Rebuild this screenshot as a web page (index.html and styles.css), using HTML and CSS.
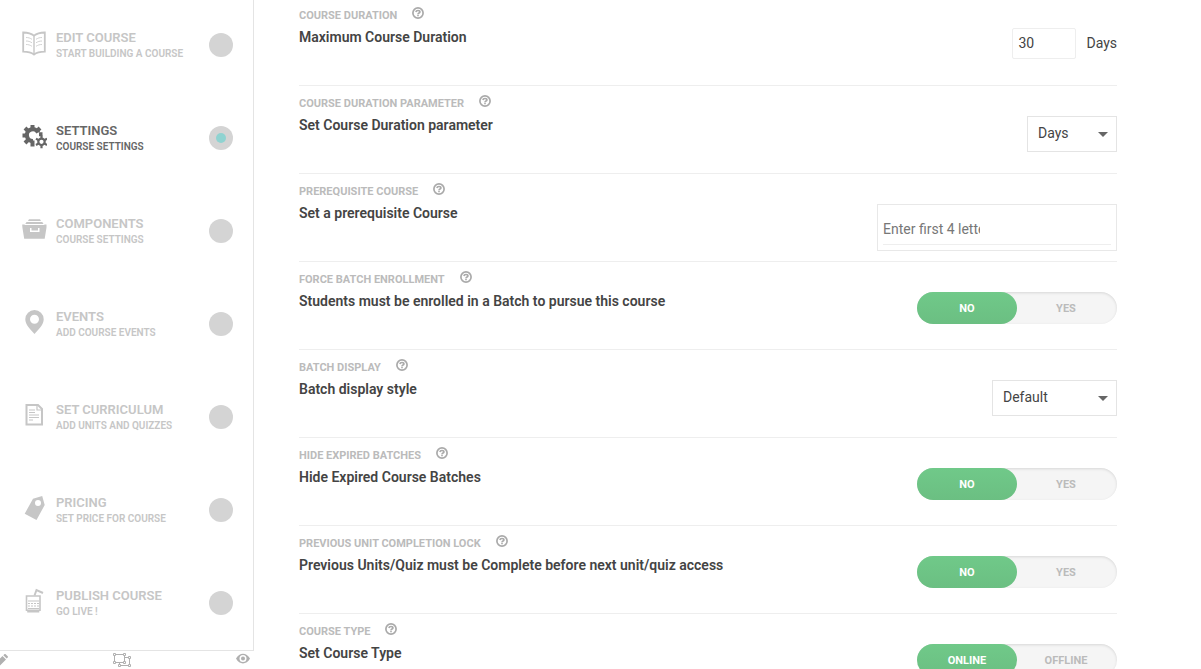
FILE: index.html
```html
<!DOCTYPE html>
<html lang="en">
<head>
<meta charset="utf-8">
<meta name="viewport" content="width=device-width, initial-scale=1">
<title>Course Settings</title>
<link rel="stylesheet" href="styles.css">
</head>
<body>
<svg class="sprite" aria-hidden="true">
  <symbol id="help" viewBox="0 0 12 12">
    <circle cx="6" cy="6" r="5.100" fill="none" stroke="currentColor" stroke-width="1.700"/>
    <path d="M3.900 5C4.100 3.700 5 3.500 6 3.500c1.200 0 1.900.6 1.900 1.400C7.900 6 6 5.900 6 7.200" fill="none" stroke="currentColor" stroke-width="1.700"/>
    <path d="M5.200 7.800h1.600v1.500H5.200z" fill="currentColor"/>
  </symbol>
</svg>
<div class="app">
  <aside class="side">
    <nav class="steps" aria-label="Course steps">
      <a class="step" href="#edit">
        <svg class="step-icon" viewBox="0 0 26 26"><path d="M2.200 2.500C6.500 2.600 10 3.200 13 5.600c3-2.400 6.500-3 10.800-3.100v19.200c-4.800 0-8 .6-10.800 2.800-2.800-2.200-6-2.800-10.800-2.800z" fill="none" stroke="currentColor" stroke-width="1.800"/><path d="M13 5.500V24" stroke="currentColor" stroke-width="1.400"/><path d="M5 7.500c2.500 0 4 .6 6 1.800M5 11c2.500 0 4 .6 6 1.800M5 14.500c2.500 0 4 .6 6 1.800M21 7.500c-2.500 0-4 .6-6 1.800M21 11c-2.500 0-4 .6-6 1.800M21 14.500c-2.500 0-4 .6-6 1.800" fill="none" stroke="currentColor" stroke-width=".8"/></svg>
        <span class="step-text"><strong>EDIT COURSE</strong><small>START BUILDING A COURSE</small></span><span class="dot"></span>
      </a>
      <a class="step active" href="#settings" aria-current="step">
        <svg class="step-icon" viewBox="0 0 26 26"><g fill="none" stroke="currentColor"><path d="M17.200 9.500A6 6 0 1 0 12 18.200" stroke-width="4.200"/><path d="M11.500 2v4M4 5l3 3M1.500 12.500h4M4 20l3-3M11.500 23.500v-6M19 5l-3 3M18 11.200h3.500" stroke-width="4"/><circle cx="20.500" cy="18.800" r="3.200" stroke-width="2.200"/><path d="M20.500 12.500v3M20.500 22v3.200M15 15.600l2.700 1.600M23.300 20.400l2.700 1.600M15 22l2.700-1.600M23.300 17.200l2.700-1.600" stroke-width="2.200"/></g></svg>
        <span class="step-text"><strong>SETTINGS</strong><small>COURSE SETTINGS</small></span><span class="dot"></span>
      </a>
      <a class="step" href="#components">
        <svg class="step-icon" viewBox="0 0 26 26"><path d="M8 3.200h11l1 1.800H7zM5.500 6h15.800l1.200 2H4.300zM1.200 8.500h2.500v.5h19.600v-.5h2.200v3l-1.800 11.300H3.200L1.400 11.500zM9 12v4h9.500v-4h-1.500v2.500h-6.500V12z" fill="currentColor" fill-rule="evenodd"/></svg>
        <span class="step-text"><strong>COMPONENTS</strong><small>COURSE SETTINGS</small></span><span class="dot"></span>
      </a>
      <a class="step" href="#events">
        <svg class="step-icon" viewBox="0 0 26 26"><path d="M13.500 1a9.200 9.200 0 0 0-9.200 9.200C4.300 16 9.500 20 13.500 25c4-5 9.200-9 9.200-14.800A9.200 9.200 0 0 0 13.500 1zm0 4.800a4.500 4.500 0 1 1 0 9 4.500 4.500 0 0 1 0-9z" fill="currentColor" fill-rule="evenodd"/></svg>
        <span class="step-text"><strong>EVENTS</strong><small>ADD COURSE EVENTS</small></span><span class="dot"></span>
      </a>
      <a class="step" href="#curriculum">
        <svg class="step-icon" viewBox="0 0 26 26"><path d="M5.500 3H17l4 4v15.500H5.500z" fill="none" stroke="currentColor" stroke-width="2"/><path d="M16 3v5h5M8 8h6M8 10.500h6M8 13h10M8 15.500h10M8 18h4" fill="none" stroke="currentColor" stroke-width="1.200"/></svg>
        <span class="step-text"><strong>SET CURRICULUM</strong><small>ADD UNITS AND QUIZZES</small></span><span class="dot"></span>
      </a>
      <a class="step" href="#pricing">
        <svg class="step-icon" viewBox="0 0 26 26"><path d="M12 3.800L21.200 1l2.500 9L15.500 25 3.700 18.700zM17 5a3 3 0 1 0 0 6 3 3 0 0 0 0-6z" fill="currentColor" fill-rule="evenodd"/></svg>
        <span class="step-text"><strong>PRICING</strong><small>SET PRICE FOR COURSE</small></span><span class="dot"></span>
      </a>
      <a class="step" href="#publish">
        <svg class="step-icon" viewBox="0 0 26 26"><path d="M5.500 8H19v14.200H5.500zM7 22v1.800h10.500V22" fill="none" stroke="currentColor" stroke-width="1.600"/><path d="M13.500 7.500l2-5.500 6.500 3" fill="none" stroke="currentColor" stroke-width="2"/><path d="M7 13h11M7 20.500h11" stroke="currentColor" stroke-width="1.200"/><path d="M7 15.500h11M7 18h11" stroke="currentColor" stroke-width="1.200" stroke-dasharray="2 1"/></svg>
        <span class="step-text"><strong>PUBLISH COURSE</strong><small>GO LIVE !</small></span><span class="dot"></span>
      </a>
    </nav>
    <div class="tools">
      <button type="button" aria-label="Edit"><svg width="15" height="16" viewBox="0 0 15 16"><path d="M1 16l1-4.500L9.500 4l3.500 3.500L5.500 15zM10.300 3.200l1-1c.5-.4 1-.3 1.400 0l2 2c.4.500.4 1 0 1.400l-1 1z" fill="currentColor"/></svg></button>
      <button type="button" aria-label="Group"><svg width="18" height="16" viewBox="0 0 18 16"><g fill="none" stroke="currentColor"><path d="M1.500 2.500h10v8h-10zM12 5.500h4.500v8h-10v-3"/><path d="M.5 1.500h2v2h-2zM10.500 1.500h2v2h-2zM.5 9.500h2v2h-2zM10.500 9.500h2v2h-2zM15.500 4.500h2v2h-2zM15.500 12.500h2v2h-2zM5.500 12.500h2v2h-2z" fill="#fff"/></g></svg></button>
      <button type="button" aria-label="Preview"><svg width="14" height="16" viewBox="0 0 14 16"><path d="M0 6.500C3.500 0 10.500 0 14 6.500 10.500 13 3.500 13 0 6.500zm7-3.500a3.500 3.500 0 1 0 0 7 3.500 3.500 0 0 0 0-7zm0 1.500a2 2 0 1 1 0 4 2 2 0 0 1 0-4z" fill="currentColor" fill-rule="evenodd"/></svg></button>
    </div>
  </aside>
  <main class="settings">
    <section class="row">
      <div class="info"><h2>COURSE DURATION <svg class="help"><use href="#help"/></svg></h2><label class="title" for="duration">Maximum Course Duration</label></div>
      <div class="duration"><input id="duration" type="text" value="30"><span>Days</span></div>
    </section>
    <section class="row">
      <div class="info"><h2>COURSE DURATION PARAMETER <svg class="help"><use href="#help"/></svg></h2><label class="title" for="parameter">Set Course Duration parameter</label></div>
      <select id="parameter" class="narrow"><option>Days</option></select>
    </section>
    <section class="row">
      <div class="info"><h2>PREREQUISITE COURSE <svg class="help"><use href="#help"/></svg></h2><label class="title" for="prerequisite">Set a prerequisite Course</label></div>
      <div class="search"><div class="search-line"><input id="prerequisite" type="text" placeholder="Enter first 4 letters of course"></div></div>
    </section>
    <section class="row">
      <div class="info"><h2>FORCE BATCH ENROLLMENT <svg class="help"><use href="#help"/></svg></h2><div class="title">Students must be enrolled in a Batch to pursue this course</div></div>
      <div class="switch" role="radiogroup" aria-label="Force batch enrollment"><label><input type="radio" name="force" checked><span>NO</span></label><label><input type="radio" name="force"><span>YES</span></label></div>
    </section>
    <section class="row">
      <div class="info"><h2>BATCH DISPLAY <svg class="help"><use href="#help"/></svg></h2><label class="title" for="display">Batch display style</label></div>
      <select id="display" class="wide"><option>Default</option></select>
    </section>
    <section class="row">
      <div class="info"><h2>HIDE EXPIRED BATCHES <svg class="help"><use href="#help"/></svg></h2><div class="title">Hide Expired Course Batches</div></div>
      <div class="switch" role="radiogroup" aria-label="Hide expired batches"><label><input type="radio" name="hide" checked><span>NO</span></label><label><input type="radio" name="hide"><span>YES</span></label></div>
    </section>
    <section class="row">
      <div class="info"><h2>PREVIOUS UNIT COMPLETION LOCK <svg class="help"><use href="#help"/></svg></h2><div class="title">Previous Units/Quiz must be Complete before next unit/quiz access</div></div>
      <div class="switch" role="radiogroup" aria-label="Previous unit completion lock"><label><input type="radio" name="lock" checked><span>NO</span></label><label><input type="radio" name="lock"><span>YES</span></label></div>
    </section>
    <section class="row">
      <div class="info"><h2>COURSE TYPE <svg class="help"><use href="#help"/></svg></h2><div class="title">Set Course Type</div></div>
      <div class="switch" role="radiogroup" aria-label="Course type"><label><input type="radio" name="type" checked><span>ONLINE</span></label><label><input type="radio" name="type"><span>OFFLINE</span></label></div>
    </section>
  </main>
</div>
</body>
</html>
```

FILE: styles.css
```css
* { box-sizing: border-box; }
body {
  margin: 0;
  background: #fff;
  color: #444;
  font: 14px/22px Roboto, "Liberation Sans", sans-serif;
}
input, select, button { font: inherit; color: inherit; }
.sprite { display: none; }
.app {
  display: grid;
  grid-template-columns: 254px 1fr;
  height: 100vh;
  overflow: hidden;
}

/* Step navigation */
.steps {
  padding-bottom: 2px;
  border-right: 1px solid #e4e4e4;
  border-bottom: 1px solid #e4e4e4;
}
.step {
  display: flex;
  align-items: center;
  padding: 29px 20px 32px 21px;
  color: #c6c6c6;
  text-decoration: none;
}
.step:last-child { padding-bottom: 29px; }
.step.active { color: #666; }
.step-icon { width: 26px; height: 26px; margin: 0 9px 4px 0; }
.step-text { display: grid; flex: 1; }
.step-text strong { font-size: 13px; font-weight: 600; line-height: 17px; }
.step-text small { font-size: 10px; font-weight: 600; line-height: 15px; }
.dot {
  display: grid;
  place-items: center;
  width: 24px;
  height: 24px;
  border-radius: 50%;
  background: #d4d4d4;
}
.active .dot::after {
  content: "";
  width: 10px;
  height: 10px;
  border-radius: 50%;
  background: #8fd3d1;
}
.tools {
  display: flex;
  justify-content: space-between;
  margin: 1px 4px 0 -7px;
  color: #b0b0b0;
}
.tools button { display: flex; padding: 0; border: 0; background: none; color: inherit; }

/* Settings rows */
.settings { margin-top: -2px; padding: 0 84px 0 45px; }
.row {
  display: flex;
  justify-content: space-between;
  align-items: flex-start;
  height: 88px;
  border-bottom: 1px solid #eee;
}
.info { padding-top: 8px; }
.row h2 {
  display: flex;
  align-items: center;
  gap: 15px;
  margin: 0;
  color: #bbb;
  font-size: 11px;
  font-weight: 700;
  line-height: 20px;
}
.help { width: 12px; height: 12px; margin-bottom: 6px; color: #aaa; }
.title { display: block; font-weight: 600; color: #444; }
.row > :last-child { margin-top: 30px; }
.duration { display: flex; align-items: flex-start; gap: 10px; }
.duration span { line-height: 30px; }
.duration input {
  width: 64px;
  height: 31px;
  padding: 0 5px 1px;
  border: 1px solid #eee;
  border-radius: 2px;
}
select {
  height: 36px;
  padding: 0 10px 2px;
  appearance: none;
  border: 1px solid #e4e4e4;
  border-radius: 0;
  background: #fff url("data:image/svg+xml,%3Csvg xmlns='http://www.w3.org/2000/svg' width='10' height='5'%3E%3Cpath d='M0 0h10L5 5z' fill='%23666'/%3E%3C/svg%3E") no-repeat right 8px center;
}
.narrow { width: 90px; }
.wide { width: 125px; }
.search {
  width: 240px;
  height: 47px;
  padding: 5px;
  border: 1px solid #e8e8e8;
}
.search-line { height: 35px; padding-top: 8px; border-bottom: 1px solid #eee; }
.search input { display: block; width: 97px; height: 22px; padding: 0; border: 0; background: none; }
.search input::placeholder { color: #777; opacity: 1; }

/* Two-way switch */
.switch {
  display: grid;
  grid-template-columns: 100px 98px;
  width: 200px;
  height: 32px;
  border-radius: 16px;
  background: #f5f5f5;
  box-shadow: inset 0 1px 3px rgba(0, 0, 0, .12);
}
.switch label { display: grid; }
.switch input { grid-area: 1 / 1; margin: 0; opacity: 0; }
.switch span {
  grid-area: 1 / 1;
  height: 32px;
  border-radius: 16px;
  color: #bbb;
  font-size: 11px;
  font-weight: 700;
  line-height: 34px;
  text-align: center;
}
.switch :checked + span { background: linear-gradient(#70c989, #6bbf82); color: #fff; }
```
